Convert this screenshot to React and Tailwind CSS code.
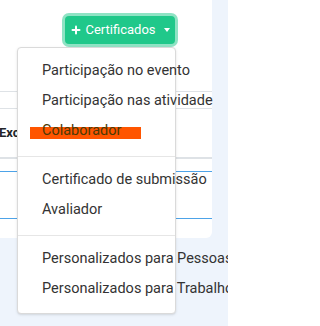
import { Plus } from "lucide-react";

const items1 = ["Participação no evento", "Participação nas atividade", "Colaborador"];
const items2 = ["Certificado de submissão", "Avaliador"];
const items3 = ["Personalizados para Pessoas", "Personalizados para Trabalhos"];

const Item = ({ label }) => (
  <div className="relative h-[30px] pl-[24px] flex items-center whitespace-nowrap text-[14.5px] text-[#333]">
    {label === "Colaborador" && (
      <span className="absolute left-[12px] top-[11px] w-[111px] h-[12px] bg-[#ff5500]" />
    )}
    <span className={label === "Colaborador" ? "relative text-[#4b3a06]" : ""}>{label}</span>
  </div>
);

const Divider = () => <div className="mt-[10px] mb-[8px] border-t border-[#e6e6e6]" />;

export default function App() {
  return (
    <div className="relative w-[228px] h-[326px] overflow-hidden bg-[#eef4fc] font-['Roboto',sans-serif]">
      {/* carte */}
      <div className="w-[212px] h-[238px] bg-white rounded-br-[6px]">
        <div className="flex justify-end pr-[37px] pt-[16px]">
          <button className="h-[28px] w-[110px] flex items-center justify-center gap-[3px] rounded-[4px] bg-[#20c88a] text-white text-[13px] ring-[3px] ring-[#20c88a]/50">
            <Plus className="w-[12px] h-[12px]" strokeWidth={4} />
            <span>Certificados</span>
            <span className="ml-[5px] w-0 h-0 border-l-[3.5px] border-r-[3.5px] border-t-[4px] border-l-transparent border-r-transparent border-t-white" />
          </button>
        </div>

        {/* tableau */}
        <div className="mt-[47px]">
          <div className="h-[17px] border-t border-[#dee2e6]" />
          <div className="h-[49px] border-t border-[#dee2e6] flex items-center -ml-[1px] text-[13px] font-bold text-[#212529]">
            Excluir
          </div>
          <div className="h-[14px] border-t-2 border-[#dee2e6]" />
          <div className="h-[47px] border-t border-[#4da3e8]" />
          <div className="border-t border-[#4da3e8]" />
        </div>
      </div>

      {/* menu */}
      <div className="absolute left-[17px] top-[47px] w-[159px] h-[267px] bg-white border border-[#dadada] rounded-[4px] shadow-sm pt-[8px]">
        {items1.map((l) => (
          <Item key={l} label={l} />
        ))}
        <Divider />
        {items2.map((l) => (
          <Item key={l} label={l} />
        ))}
        <Divider />
        {items3.map((l) => (
          <Item key={l} label={l} />
        ))}
      </div>
    </div>
  );
}
